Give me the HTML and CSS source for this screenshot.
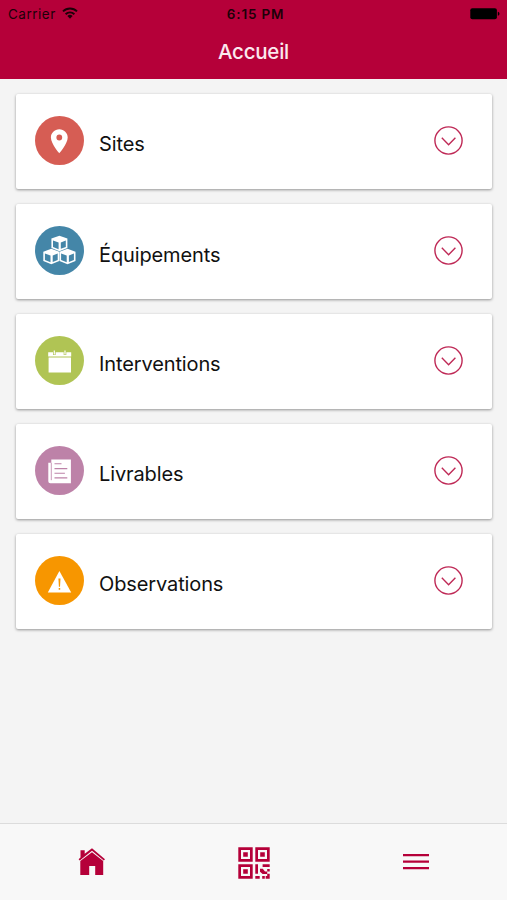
FILE: index.html
```html
<!DOCTYPE html>
<html lang="fr">
<head>
    <meta charset="UTF-8">
    <meta name="viewport" content="width=device-width, initial-scale=1.0">
    <title>Accueil</title>
    <link rel="stylesheet" href="styles.css">
</head>
<body>
    <header class="header">
        <div class="status-bar">
            <div class="carrier">
                <span>Carrier</span>
                <svg width="16" height="12" viewBox="0 0 16 12">
                    <g fill="none" stroke="#1c0008" stroke-width="1.9">
                        <path d="M1 4.4a10 10 0 0 1 14 0"/>
                        <path d="M3.6 7.2a6.3 6.3 0 0 1 8.8 0"/>
                    </g>
                    <path d="M5.4 9a3.7 3.7 0 0 1 5.2 0L8 11.7z" fill="#1c0008"/>
                </svg>
            </div>
            <span class="time">6:15 PM</span>
            <svg class="battery" width="30" height="12" viewBox="0 0 30 12">
                <rect x="0.3" y="0.3" width="26.6" height="11" rx="2"/>
                <path d="M27.8 3.8c2.2.6 2.2 3.4 0 4z"/>
            </svg>
        </div>
        <h1 class="title">Accueil</h1>
    </header>

    <main class="list">
        <div class="card">
            <svg class="icon" viewBox="0 0 49 49">
                <circle cx="24.5" cy="24.5" r="24.5" fill="#d65d54"/>
                <path fill="#fff" fill-rule="evenodd" d="M24.3 13.2c-4.7 0-8.4 3.7-8.4 8.3 0 6.2 8.4 15.8 8.4 15.8s8.4-9.6 8.4-15.8c0-4.6-3.7-8.3-8.4-8.3zm0 5.4a2.9 2.9 0 1 1 0 5.8 2.9 2.9 0 0 1 0-5.8z"/>
            </svg>
            <span class="label">Sites</span>
            <svg class="chevron" viewBox="0 0 29 29"><circle cx="14.5" cy="14.5" r="13.6"/><path d="M7.8 11.8l6.8 6.9 6.8-6.9"/></svg>
        </div>

        <div class="card">
            <svg class="icon" viewBox="0 0 49 49">
                <defs>
                    <g id="cube">
                        <path d="M0-7.6L8-4.7V4.7L0 7.9-8 4.7V-4.7z" fill="#fff"/>
                        <path d="M-6.4-2.8L-.8-.8V5.9L-6.4 3.7zM6.4-2.8L1.4-.8V5.5L6.4 3.6z" fill="#4486a8"/>
                    </g>
                </defs>
                <circle cx="24.5" cy="24.5" r="24.5" fill="#4486a8"/>
                <use href="#cube" x="24.4" y="17.3"/>
                <use href="#cube" x="16.3" y="30.4"/>
                <use href="#cube" x="32.5" y="30.4"/>
            </svg>
            <span class="label label-accent">Équipements</span>
            <svg class="chevron" viewBox="0 0 29 29"><circle cx="14.5" cy="14.5" r="13.6"/><path d="M7.8 11.8l6.8 6.9 6.8-6.9"/></svg>
        </div>

        <div class="card">
            <svg class="icon" viewBox="0 0 49 49">
                <circle cx="24.5" cy="24.5" r="24.5" fill="#b0c454"/>
                <path fill="#fff" d="M13.2 16.2h23v4.2h-23zM13.6 21.4h22.4v15.2H13.6z"/>
                <path d="M19.3 15v4M30 15v4" stroke="#b0c454" stroke-width="2.6"/>
                <path d="M19.3 14.6v4M30 14.6v4" stroke="#fff" stroke-width="1.2"/>
            </svg>
            <span class="label">Interventions</span>
            <svg class="chevron" viewBox="0 0 29 29"><circle cx="14.5" cy="14.5" r="13.6"/><path d="M7.8 11.8l6.8 6.9 6.8-6.9"/></svg>
        </div>

        <div class="card">
            <svg class="icon" viewBox="0 0 49 49">
                <circle cx="24.5" cy="24.5" r="24.5" fill="#bd82a8"/>
                <path fill="#fff" d="M16.3 13.4h19.6v23.8H15.3a2 2 0 0 1-2-2V16.8h3z"/>
                <path d="M16.3 16.8v17.4" stroke="#bd82a8" stroke-width=".8"/>
                <path d="M19.5 17.7h7M19.5 22.6h12.8M19.5 27.2h10.4M19.5 31.9h12.8" stroke="#bd82a8" stroke-width="1.1"/>
            </svg>
            <span class="label">Livrables</span>
            <svg class="chevron" viewBox="0 0 29 29"><circle cx="14.5" cy="14.5" r="13.6"/><path d="M7.8 11.8l6.8 6.9 6.8-6.9"/></svg>
        </div>

        <div class="card">
            <svg class="icon" viewBox="0 0 49 49">
                <circle cx="24.5" cy="24.5" r="24.5" fill="#f79600"/>
                <path fill="#fff" d="M24.4 15L36.2 36.6H12.8z"/>
                <path d="M23.4 22.5h2.1l-.5 8.3h-1.1zM23.7 31.9h1.5v1.8h-1.5z" fill="#f79600"/>
            </svg>
            <span class="label">Observations</span>
            <svg class="chevron" viewBox="0 0 29 29"><circle cx="14.5" cy="14.5" r="13.6"/><path d="M7.8 11.8l6.8 6.9 6.8-6.9"/></svg>
        </div>
    </main>

    <nav class="tabs">
        <a class="tab tab-home">
            <svg width="28" height="28" viewBox="0 0 28 28">
                <path d="M2.5 9.5V2.3h4.2v3.5L14 .3l13 11-1.2 1.2L14 2.8 1.8 12.4.6 11.2z"/>
                <path d="M14 4.2l11.2 8.9v14h-8V18h-6v9.1H2.3v-14z"/>
            </svg>
        </a>
        <a class="tab">
            <svg width="32" height="32" viewBox="0 0 32 32">
                <path fill-rule="evenodd" d="M.3.3h14.4v14.4H.3zM3 3v9h9V3zM17.3.3h14.4v14.4H17.3zM20 3v9h9V3zM.3 17.3h14.4v14.4H.3zM3 20v9h9v-9z"/>
                <path d="M5.2 5.2h4.6v4.6H5.2zM22.2 5.2h4.6v4.6h-4.6zM5.2 22.2h4.6v4.6H5.2z"/>
                <path d="M17.3 17.3H20v9.4h-2.7zM17.3 29h4.4v2.7h-4.4zM24.6 17.3h7.1V20h-7.1zM22 21.8h2.8l2.2 2.7h2.2v2.6h-4.6L22 24.8zM29.2 22h2.5v2.5h-2.5zM24.2 29h2.6v2.7h-2.6zM29.2 26.7h2.5v5h-4V29h1.5z"/>
            </svg>
        </a>
        <a class="tab tab-menu">
            <svg width="26" height="18" viewBox="0 0 26 18">
                <path d="M0 1h26v2.2H0zM0 7.5h26v2.2H0zM0 14h26v2.2H0z"/>
            </svg>
        </a>
    </nav>
</body>
</html>
```

FILE: styles.css
```css
* {
    box-sizing: border-box;
}
body {
    margin: 0;
    height: 900px;
    display: flex;
    flex-direction: column;
    background-color: #f4f4f4;
    font-family: Inter, "Liberation Sans", sans-serif;
    color: #111;
}
.header {
    height: 79px;
    background-color: #b50039;
}
.status-bar {
    display: grid;
    grid-template-columns: 1fr auto 1fr;
    align-items: center;
    height: 27px;
    padding: 0 7px 0 8px;
    font-size: 13.5px;
    color: #1c0008;
}
.carrier {
    display: flex;
    align-items: center;
    gap: 6px;
    letter-spacing: 0.5px;
}
.carrier svg {
    margin-top: -2px;
}
.time {
    font-weight: 600;
    letter-spacing: 0.8px;
    padding-left: 3px;
}
.battery {
    justify-self: end;
}
.title {
    margin: 12px 0 0;
    text-align: center;
    font-size: 20.5px;
    line-height: 26px;
    font-weight: 500;
    letter-spacing: -0.25px;
    color: #fbe8ee;
}
.list {
    flex: 1;
    display: flex;
    flex-direction: column;
    gap: 15px;
    padding: 15px 15px 0 16px;
}
.card {
    display: flex;
    align-items: center;
    height: 95px;
    padding: 0 29px 2px 19px;
    background-color: #fff;
    border-radius: 2px;
    box-shadow: 0 1px 3px rgba(0, 0, 0, 0.4);
}
.icon {
    width: 49px;
    height: 49px;
    margin-top: -1px;
}
.label {
    flex: 1;
    margin-left: 15px;
    padding-top: 7px;
    font-size: 20px;
    line-height: 26px;
    letter-spacing: -0.12px;
}
.label-accent {
    padding-top: 9px;
}
.chevron {
    width: 29px;
    height: 29px;
    fill: none;
    stroke: #bf2956;
    stroke-width: 1.4;
}
.tabs {
    display: grid;
    grid-template-columns: repeat(3, 1fr);
    height: 77px;
    padding: 0 10px 0 11px;
    background-color: #f8f8f8;
    border-top: 1px solid #dcdcdc;
}
.tab {
    display: flex;
    align-items: center;
    justify-content: center;
    padding-top: 2px;
    fill: #b50039;
}
.tab-home {
    padding-top: 0;
}
.tab-menu {
    padding-top: 0;
}
```
